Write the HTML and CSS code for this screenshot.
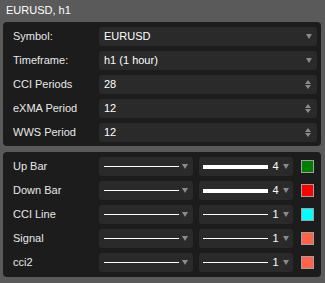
FILE: index.html
```html
<!DOCTYPE html>
<html lang="en">
<head>
    <meta charset="UTF-8">
    <title>EURUSD, h1</title>
    <link rel="stylesheet" href="styles.css">
</head>
<body>

    <!-- Cabecera -->
    <div class="title">EURUSD, h1</div>

    <!-- Parámetros -->
    <div class="panel params">
        <div class="row">
            <span class="label">Symbol:</span>
            <div class="field"><span class="value">EURUSD</span><span class="arrow"></span></div>
        </div>
        <div class="row">
            <span class="label">Timeframe:</span>
            <div class="field"><span class="value">h1 (1 hour)</span><span class="arrow"></span></div>
        </div>
        <div class="row">
            <span class="label">CCI Periods</span>
            <div class="field"><span class="value">28</span><span class="spin"><i class="up"></i><i class="down"></i></span></div>
        </div>
        <div class="row">
            <span class="label">eXMA Period</span>
            <div class="field"><span class="value">12</span><span class="spin"><i class="up"></i><i class="down"></i></span></div>
        </div>
        <div class="row">
            <span class="label">WWS Period</span>
            <div class="field"><span class="value">12</span><span class="spin"><i class="up"></i><i class="down"></i></span></div>
        </div>
    </div>

    <!-- Estilos de líneas -->
    <div class="panel styles">
        <div class="row">
            <span class="label">Up Bar</span>
            <div class="field"><span class="line"></span><span class="arrow"></span></div>
            <div class="field"><span class="line thick"></span><span class="num">4</span><span class="arrow"></span></div>
            <span class="swatch green"></span>
        </div>
        <div class="row">
            <span class="label">Down Bar</span>
            <div class="field"><span class="line"></span><span class="arrow"></span></div>
            <div class="field"><span class="line thick"></span><span class="num">4</span><span class="arrow"></span></div>
            <span class="swatch red"></span>
        </div>
        <div class="row">
            <span class="label">CCI Line</span>
            <div class="field"><span class="line"></span><span class="arrow"></span></div>
            <div class="field"><span class="line"></span><span class="num">1</span><span class="arrow"></span></div>
            <span class="swatch cyan"></span>
        </div>
        <div class="row">
            <span class="label">Signal</span>
            <div class="field"><span class="line"></span><span class="arrow"></span></div>
            <div class="field"><span class="line"></span><span class="num">1</span><span class="arrow"></span></div>
            <span class="swatch tomato"></span>
        </div>
        <div class="row">
            <span class="label">cci2</span>
            <div class="field"><span class="line"></span><span class="arrow"></span></div>
            <div class="field"><span class="line"></span><span class="num">1</span><span class="arrow"></span></div>
            <span class="swatch tomato"></span>
        </div>
    </div>

</body>
</html>
```

FILE: styles.css
```css
/* Estilos generales */
body {
    margin: 0 4px 0 3px;
    font-family: "Liberation Sans", Arial, sans-serif;
    font-size: 11px;
    line-height: 13px;
    background-color: #5a5a5a;
    color: #f0f0f0;
}

.title {
    padding: 4px 3px 5px;
    color: #fff;
}

/* Paneles */
.panel {
    background-color: #1c1c1c;
    border-radius: 4px;
    padding: 5px 4px 4px 10px;
    display: flex;
    flex-direction: column;
    gap: 5px;
}
.panel.styles {
    margin-top: 6px;
    padding-bottom: 5px;
}

.row {
    display: grid;
    grid-template-columns: 86px 1fr;
    align-items: center;
    height: 19px;
}
.styles .row {
    grid-template-columns: 80px 94px 94px auto;
    column-gap: 6px;
}

.label {
    color: #e8e8e8;
}

/* Campos */
.field {
    display: flex;
    align-items: center;
    height: 19px;
    background-color: #2a2a2a;
    border-radius: 3px;
    padding: 0 5px 0 5px;
}
.value {
    flex: 1;
    color: #fff;
}

.arrow {
    width: 0;
    height: 0;
    border-left: 3.5px solid transparent;
    border-right: 3.5px solid transparent;
    border-top: 5px solid #8a8a8a;
    margin-left: 3px;
}

.spin {
    display: flex;
    flex-direction: column;
    gap: 1px;
    margin-right: 1px;
}
.spin i {
    width: 0;
    height: 0;
    border-left: 3px solid transparent;
    border-right: 3px solid transparent;
}
.spin .up {
    border-bottom: 4px solid #8a8a8a;
}
.spin .down {
    border-top: 4px solid #8a8a8a;
}

/* Líneas */
.line {
    flex: 1;
    height: 1px;
    background-color: #fff;
}
.line.thick {
    height: 4px;
}
.styles .field + .field {
    padding-left: 4px;
    padding-right: 4px;
}
.num {
    width: 9px;
    margin-left: 3px;
    text-align: center;
    color: #fff;
}

/* Colores */
.swatch {
    width: 11px;
    height: 11px;
    border: 1px solid #a0a0a0;
    margin-left: 2px;
}
.green { background-color: #008000; }
.red { background-color: #ff0000; }
.cyan { background-color: #00ffff; }
.tomato { background-color: #ff6347; }
```
